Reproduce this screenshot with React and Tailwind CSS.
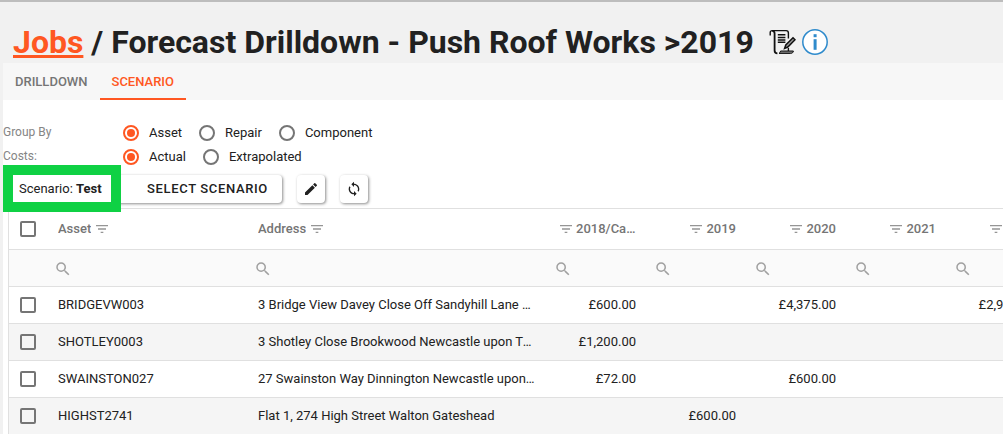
import React, { useState } from "react"
import { MdEdit, MdFilterList, MdSearch, MdSync } from "react-icons/md"

const YEARS = ["2018/Catch", "2019", "2020", "2021", "2022"]

const ROWS = [
  {
    asset: "BRIDGEVW003",
    address: "3 Bridge View Davey Close Off Sandyhill Lane Newcastle",
    costs: ["£600.00", "", "£4,375.00", "", "£2,950.00"],
  },
  {
    asset: "SHOTLEY0003",
    address: "3 Shotley Close Brookwood Newcastle upon Tyne",
    costs: ["£1,200.00", "", "", "", ""],
  },
  {
    asset: "SWAINSTON027",
    address: "27 Swainston Way Dinnington Newcastle upon Tyne",
    costs: ["£72.00", "", "£600.00", "", ""],
  },
  {
    asset: "HIGHST2741",
    address: "Flat 1, 274 High Street Walton Gateshead",
    costs: ["", "£600.00", "", "", ""],
  },
]

const ScrollIcon = () => (
  <svg viewBox="0 0 27 26" className="h-[26px] w-[27px]" fill="none" stroke="#111" strokeWidth="1.4">
    <path d="M1.2 6.5V3.6C1.2 2.2 2 1.6 3.2 1.6H17.2C18.6 1.6 19.4 2.6 19.4 4V9.5" />
    <path d="M3.2 1.8C4.8 1.8 5.6 2.8 5.6 4.4V21.4C5.6 23.2 6.6 24.3 8.4 24.3" strokeWidth="1.8" />
    <path d="M10 24.4C11 24 11.4 23 11.6 22H24.4C24.2 23.6 23.2 24.4 21.6 24.4Z" fill="#777" strokeWidth="1" />
    <path d="M19.4 19V22" />
    <path d="M8.8 5.8H16.4M8.8 8.4H16.4M8.8 11H16.4M8.8 13.2H16.4" strokeWidth="1.5" />
    <path d="M24 8.8L26 10.8L18.8 18L15.6 19.4L16.8 16Z" fill="#999" strokeWidth="1.5" />
  </svg>
)

const InfoIcon = () => (
  <svg viewBox="0 0 26 26" className="size-[26px]">
    <circle cx="13" cy="13" r="12.2" fill="#fff" stroke="#2f8bcc" strokeWidth="1.5" />
    <rect x="11.6" y="5.2" width="3" height="3" fill="#2f8bcc" />
    <rect x="11.6" y="10.2" width="3" height="10.6" fill="#2f8bcc" />
  </svg>
)

const RadioRow = ({ label, name, options }) => {
  const [selected, setSelected] = useState(options[0])

  return (
    <fieldset className="flex h-6 items-center">
      <legend className="float-left w-[120px] text-xs leading-6 text-[#858585]">{label}</legend>
      <div className="flex gap-[17px] pt-0.5">
        {options.map((option) => (
          <label key={option} className="flex items-center gap-2.5">
            <input
              type="radio"
              name={name}
              checked={selected === option}
              onChange={() => setSelected(option)}
              className="size-4 appearance-none rounded-full border-2 border-[#757575] p-0.5 checked:border-[#ff5722] checked:bg-[#ff5722] checked:bg-clip-content"
            />
            {option}
          </label>
        ))}
      </div>
    </fieldset>
  )
}

const RowCheckbox = ({ label }) => (
  <input
    type="checkbox"
    aria-label={label}
    className="block size-4 appearance-none rounded-xs border-2 border-[#757575] checked:border-[#ff5722] checked:bg-[#ff5722]"
  />
)

const IconButton = ({ label, children }) => (
  <button
    aria-label={label}
    className="flex size-7 items-center justify-center rounded-sm bg-white shadow-[1px_1px_3px_rgba(0,0,0,0.45)]"
  >
    {children}
  </button>
)

const HeaderCell = ({ title, numeric }) => (
  <th className="pr-3 pl-2.5 font-medium text-[#757575]">
    <div className={numeric ? "flex flex-row-reverse items-center gap-0.5" : "flex items-center gap-[3px]"}>
      <span className="truncate">{title}</span>
      <MdFilterList className="size-4 shrink-0 text-[#959595]" />
    </div>
  </th>
)

const ForecastTable = () => (
  <div className="ml-[5px] overflow-hidden border-t border-l border-[#e0e0e0]">
    <table className="w-[1039px] table-fixed border-separate border-spacing-0 text-left">
      <colgroup>
        <col className="w-[39px]" />
        <col className="w-[200px]" />
        <col className="w-[300px]" />
        {YEARS.map((year) => (
          <col key={year} className="w-[100px]" />
        ))}
      </colgroup>
      <thead>
        <tr className="h-[41px] *:border-b *:border-[#e0e0e0]">
          <th className="pl-[11px]">
            <RowCheckbox label="Select all" />
          </th>
          <HeaderCell title="Asset" />
          <HeaderCell title="Address" />
          {YEARS.map((year) => (
            <HeaderCell key={year} title={year} numeric />
          ))}
        </tr>
        <tr className="h-[37px] bg-[#fafafa] *:border-b *:border-[#e0e0e0]">
          <td />
          {["Asset", "Address", ...YEARS].map((column) => (
            <td key={column} className="pt-0.5 pl-1.5">
              <button aria-label={`Search ${column}`} className="block text-[#a0a0a0]">
                <MdSearch className="size-[18px]" />
              </button>
            </td>
          ))}
        </tr>
      </thead>
      <tbody>
        {ROWS.map((row) => (
          <tr
            key={row.asset}
            className="h-[37px] *:border-b *:border-[#e0e0e0] last:h-9 last:*:border-b-0 even:bg-[#f5f5f5]"
          >
            <td className="pl-[11px]">
              <RowCheckbox label={`Select ${row.asset}`} />
            </td>
            <td className="truncate pr-3 pl-2.5">{row.asset}</td>
            <td className="truncate pr-3 pl-2.5">{row.address}</td>
            {row.costs.map((cost, index) => (
              <td key={YEARS[index]} className="pr-3 pl-2.5 text-right">
                {cost}
              </td>
            ))}
          </tr>
        ))}
      </tbody>
    </table>
  </div>
)

export default function App() {
  return (
    <div className="min-h-screen overflow-hidden border-t-2 border-[#bdbdbd] bg-[#f1f1f1] font-[Roboto,sans-serif] text-[13px] leading-5 text-[#212121]">
      {/* Title */}
      <header className="flex h-[61px] items-center pt-5 pb-0.5 pl-[13px]">
        <h1 className="text-[32px] leading-9 font-bold whitespace-nowrap">
          <a href="#jobs" className="text-[#ff5722] underline">
            Jobs
          </a>{" "}
          / Forecast Drilldown - Push Roof Works &gt;2019
        </h1>
        <div className="ml-[15px] flex items-center gap-1.5">
          <button aria-label="Notes">
            <ScrollIcon />
          </button>
          <button aria-label="Information">
            <InfoIcon />
          </button>
        </div>
      </header>

      <main className="ml-[3px] min-h-[371px] bg-white">
        {/* Tabs */}
        <nav className="flex h-[37px] bg-[#f7f7f7] font-medium">
          <a href="#drilldown" className="flex items-center px-3 text-[#757575]">
            DRILLDOWN
          </a>
          <a href="#scenario" className="flex items-center border-b-2 border-[#ff5722] px-3 pt-0.5 text-[#ff5722]">
            SCENARIO
          </a>
        </nav>

        {/* Options */}
        <div className="pt-5">
          <RadioRow label="Group By" name="group-by" options={["Asset", "Repair", "Component"]} />
          <RadioRow label="Costs:" name="costs" options={["Actual", "Extrapolated"]} />
        </div>

        {/* Scenario toolbar */}
        <div className="mt-[7px] mb-[5px] flex h-7 items-start gap-[15px] pl-2.5">
          <div className="flex">
            <div className="relative z-10 flex h-[27px] w-[98px] items-center bg-white pl-1.5 outline-10 outline-[#0fd144]">
              <span>
                Scenario: <b>Test</b>
              </span>
            </div>
            <button className="h-7 rounded-sm bg-white pr-3.5 pl-9 font-medium tracking-wider shadow-[1px_1px_3px_rgba(0,0,0,0.45)]">
              SELECT SCENARIO
            </button>
          </div>
          <IconButton label="Edit scenario">
            <MdEdit className="size-4" />
          </IconButton>
          <IconButton label="Refresh scenario">
            <MdSync className="size-4" />
          </IconButton>
        </div>

        <ForecastTable />
      </main>
    </div>
  )
}
